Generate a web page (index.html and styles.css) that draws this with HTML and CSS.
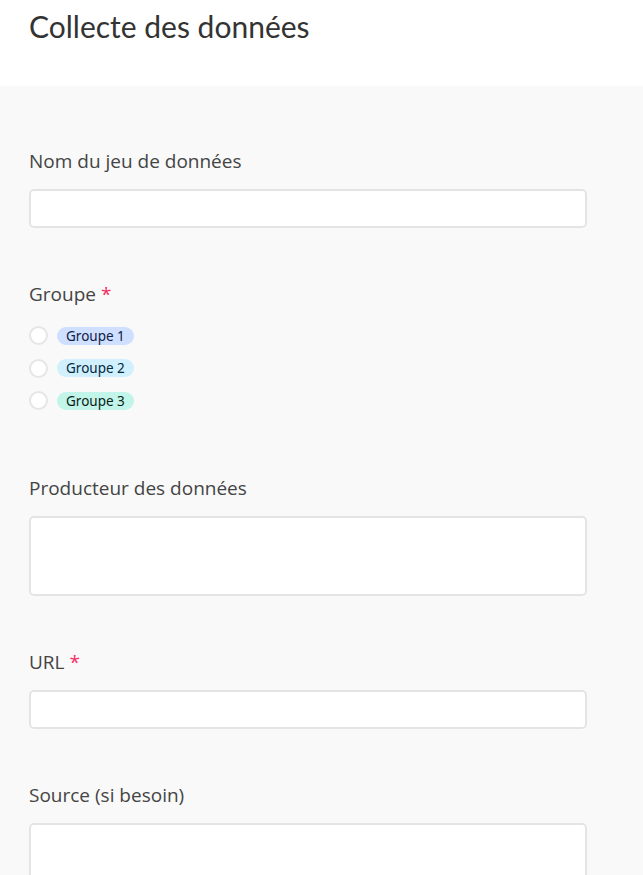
FILE: index.html
```html
<!DOCTYPE html>
<html lang="fr">
<head>
<meta charset="utf-8">
<link rel="stylesheet" href="styles.css">
</head>
<body>
<header class="header">
  <h1 class="title">Collecte des données</h1>
</header>
<main class="main">
  <form class="form">
    <div class="field">
      <label class="label">Nom du jeu de données</label>
      <div class="input"></div>
    </div>
    <div class="field field-options">
      <label class="label">Groupe <span class="req">*</span></label>
      <div class="options">
        <div class="option"><span class="radio"></span><span class="pill pill-blue">Groupe 1</span></div>
        <div class="option"><span class="radio"></span><span class="pill pill-cyan">Groupe 2</span></div>
        <div class="option"><span class="radio"></span><span class="pill pill-teal">Groupe 3</span></div>
      </div>
    </div>
    <div class="field">
      <label class="label">Producteur des données</label>
      <div class="input textarea"></div>
    </div>
    <div class="field">
      <label class="label">URL <span class="req">*</span></label>
      <div class="input"></div>
    </div>
    <div class="field">
      <label class="label">Source (si besoin)</label>
      <div class="input textarea"></div>
    </div>
  </form>
</main>
</body>
</html>
```
FILE: styles.css
```css
html, body {
  margin: 0;
  padding: 0;
  background: #f9f9f9;
}
body {
  font-family: "Open Sans", "Noto Sans", sans-serif;
  color: #333;
}
.header {
  background: #fff;
  height: 86px;
  padding: 0 29px;
  box-sizing: border-box;
}
.title {
  margin: 0;
  padding-top: 6px;
  font-family: Lato, sans-serif;
  font-weight: 400;
  font-size: 30px;
  line-height: 40px;
  color: #333;
}
.main {
  background: #f9f9f9;
  padding: 63px 29px 0;
}
.form {
  width: 558px;
}
.field {
  margin-bottom: 54px;
}
.field-options {
  margin-bottom: 66px;
}
.label {
  display: block;
  font-size: 19px;
  line-height: 24px;
  color: #444;
  margin-bottom: 16px;
}
.field-options .label {
  margin-bottom: 20px;
}
.req {
  color: #f82b60;
}
.input {
  height: 39px;
  box-sizing: border-box;
  background: #fff;
  border: 2px solid #e4e4e4;
  border-radius: 5px;
}
.textarea {
  height: 80px;
}
.options {
  display: flex;
  flex-direction: column;
  gap: 13.5px;
}
.option {
  display: flex;
  align-items: center;
  gap: 9px;
  height: 19px;
}
.radio {
  width: 19px;
  height: 19px;
  box-sizing: border-box;
  border: 2px solid #e6e6e6;
  border-radius: 50%;
  background: #fff;
}
.pill {
  font-family: "Noto Sans", sans-serif;
  font-size: 13.5px;
  line-height: 18px;
  padding: 0 9px;
  border-radius: 9px;
}
.pill-blue { background: #cfdfff; color: #102046; }
.pill-cyan { background: #d0f0fd; color: #04283f; }
.pill-teal { background: #c2f5e9; color: #0b1d18; }
```
